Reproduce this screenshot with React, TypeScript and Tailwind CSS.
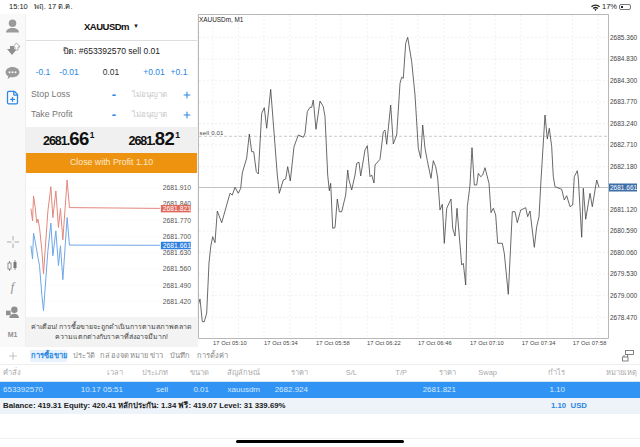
import React from "react";
import { FilePlus, Plus } from "lucide-react";

const F = "font-['Liberation_Sans','Noto_Sans',sans-serif]";

const line =
  "198.3,305 200,299 202.3,321.7 204.3,321.7 206.7,313 209,263 210.7,246.7 212.7,236.7 215,242.7 217.3,211 221.7,222.7 230,193.3 232.3,195 235,187.3 238.3,193.3 240.7,188.3 242.3,173 246.7,158 249.3,134 251.7,151.7 253.7,151.7 256.3,171.7 258.3,174 261.7,113.3 264.3,107.7 266.7,128.3 270.7,89.3 277.3,175 279.3,193.3 283.3,180 285.7,179 287.7,166.7 290.3,181 294,146.7 298.3,135 303.3,137.3 305,133.3 307.3,111.7 310,107.3 311.7,107.3 313.3,100 316,129.3 320,101 323.3,106.7 325,116.7 327.7,175 329.3,190.7 330.7,183.3 332.7,228.3 335,227.7 337.3,199 339.3,211.7 341.7,211.7 345.7,195 347.7,170 349,180 351.7,190 355,175 356.7,163.3 359,162.3 360.7,176 365,150 367.3,145.7 370,176.7 371.7,175 374,183 375,165 380,159.3 383.3,131.7 385,130 386.7,144.3 390.7,105 393.3,144 396.7,135 400,83.3 401.7,77.3 403.3,78.3 405.7,43.3 407.7,37.3 411.7,61.7 415,95 418.3,148.3 420.7,158.3 422.7,125 425,148.3 427.3,160.7 431,178.3 433.3,160.7 435.7,166.7 437.7,178 440,210 442.3,204.3 444.3,243.3 446.7,208.3 451,199 452.7,228.3 455,236 457,208.3 461.7,265 463.3,263.3 465.7,285 467.3,206.7 470,185 472,147.7 474.3,185 476.7,185 478.3,173.3 480.7,176.7 482.7,175 485,167.7 489,183.3 491,212.7 493.3,208.3 495.7,215 497.7,243.3 502.3,243.3 504.3,253.3 508.3,294.3 512.3,211.7 515,211.7 517.3,222.7 520.7,210 525.7,207.7 527.7,216.7 530,211 534.3,247.3 536.7,226.7 539,216.7 541,180 545,115 547.3,139 549.3,128.3 551.7,146.7 553.3,176.7 555,186.7 561.7,189.3 564.3,200 566.7,195.7 570,206.7 572.7,205 574.3,176.7 577.3,170.7 578.3,178 581.7,237.3 583.3,188.3 585.7,219.3 590,193.3 592.3,206.7 596.7,180 599,187.3";

const red =
  "30.7,207.7 32.3,220 33.3,195 35,206.7 36.5,222 37.7,218.3 39.3,226.7 41.7,250 43.3,273.3 47.7,210 50.7,185.7 52.7,216.7 55.7,190 58.3,226.7 60.3,207.7 62.7,239 67,179 69.3,206.7 160,207.5";
const blue =
  "30.7,245 32.3,258.3 33.3,232.3 35,240.7 37.7,256.7 39.3,265 41.7,295 43.3,310 47.7,250 50.7,222.3 52.7,255 55.7,230 58.3,265 60.3,245 62.7,279 67,216.7 69.3,244.3 160,244.5";

const hY = [37.3, 59, 80.3, 102, 123.7, 145, 166.7, 209.3, 231, 252.3, 274, 295.7, 317.3];
const vX = [213, 238.5, 264, 290, 316, 341, 367, 392, 418, 444, 470, 495, 521, 547, 572.5, 598];
const prices: [number, string][] = [
  [37.3, "2685.360"], [59, "2684.830"], [80.3, "2684.300"], [102, "2683.770"], [123.7, "2683.240"],
  [145, "2682.710"], [166.7, "2682.180"], [209.3, "2681.120"], [231, "2680.590"], [252.3, "2680.060"],
  [274, "2679.530"], [295.7, "2679.000"], [317.3, "2678.470"],
];
const times: [number, string][] = [
  [213, "05:10"], [264, "05:34"], [316, "05:58"], [367, "06:22"], [418, "06:46"], [470, "07:10"], [521.7, "07:34"], [572.7, "07:58"],
];

function Chart() {
  return (
    <svg viewBox="198 14 442 333" className="w-[442px] h-[333px] block" style={{ fontFamily: "'Liberation Sans',sans-serif" }}>
      {hY.map((y) => (
        <line key={y} x1={199} x2={608} y1={y} y2={y} stroke="#e4e4e4" strokeWidth={0.7} strokeDasharray="1.5 2.5" />
      ))}
      {vX.map((x) => (
        <line key={x} x1={x} x2={x} y1={15} y2={338} stroke="#e4e4e4" strokeWidth={0.7} strokeDasharray="1.5 2.5" />
      ))}
      <line x1={199} x2={608} y1={136.3} y2={136.3} stroke="#b5b5b5" strokeWidth={0.7} strokeDasharray="3 2" />
      <line x1={199} x2={608} y1={187.5} y2={187.5} stroke="#c2c2c2" strokeWidth={1} />
      <polyline points={line} fill="none" stroke="#444" strokeWidth={0.8} />
      <path d="M198.5 338.5V14.5H608.5V338.5H198.5" fill="none" stroke="#b8b8b8" strokeWidth={1} />
      <text x={199} y={21.5} fontSize={6.4} fill="#222">XAUUSDm, M1</text>
      <text x={199.5} y={135} fontSize={6} fill="#444" letterSpacing={0.2}>sell 0.01</text>
      {prices.map(([y, t]) => (
        <text key={t} x={610} y={y + 2.4} fontSize={6.5} fill="#444">{t}</text>
      ))}
      <rect x={609} y={183.5} width={28} height={8} fill="#3d6ea8" />
      <text x={610} y={189.9} fontSize={6.5} fill="#fff">2681.661</text>
      {times.map(([x, t]) => (
        <text key={t} x={x} y={345} fontSize={5.7} fill="#444" letterSpacing={0.1}>17 Oct {t}</text>
      ))}
    </svg>
  );
}

function MiniChart() {
  const labels: [number, string][] = [
    [187, "2681.910"], [203, "2681.840"], [219.5, "2681.770"], [236, "2681.700"],
    [252, "2681.630"], [268, "2681.560"], [284.5, "2681.490"], [300.5, "2681.420"],
  ];
  return (
    <svg viewBox="26 172 171 145" className="w-[171px] h-[145px] block" style={{ fontFamily: "'Liberation Sans',sans-serif" }}>
      {labels.map(([y]) => (
        <line key={y} x1={29} x2={160} y1={y} y2={y} stroke="#eeeeee" strokeWidth={0.7} strokeDasharray="1.5 2.5" />
      ))}
      <polyline points={red} fill="none" stroke="#e2877c" strokeWidth={1} />
      <polyline points={blue} fill="none" stroke="#6ea6e8" strokeWidth={1} />
      {labels.map(([y, t]) => (
        <text key={t} x={163} y={y + 2.5} fontSize={6.8} fill="#555">{t}</text>
      ))}
      <rect x={161} y={204} width={30} height={7.5} fill="#e0685c" />
      <text x={163} y={210} fontSize={6.8} fill="#fff">2681.821</text>
      <rect x={161} y={241} width={30} height={7.5} fill="#2f7fe0" />
      <text x={163} y={247} fontSize={6.8} fill="#fff">2681.661</text>
    </svg>
  );
}

function ToolSlot({ children, h }: { children: React.ReactNode; h: string }) {
  return <div className={`flex items-center justify-center w-full ${h}`}>{children}</div>;
}

function Toolbar() {
  return (
    <div className="w-[26px] bg-[#f9f9f9] border-r border-[#eeeeee] flex flex-col items-center text-[#9a9a9a]">
      <ToolSlot h="h-[23px]">
        <svg width="15" height="16" viewBox="0 0 16 16" fill="#9b9b9b">
          <circle cx="8" cy="5" r="4" />
          <path d="M1 15c0-3 3-5 7-5s7 2 7 5z" />
        </svg>
      </ToolSlot>
      <ToolSlot h="h-[24px]">
        <svg width="16" height="16" viewBox="0 0 16 16">
          <path d="M2 8h3V5h4v3h3l-5 6z" fill="#8f8f8f" />
          <path d="M8 6h2V9h3V6h2l-3.5-4z" fill="#fff" stroke="#999" strokeWidth="0.8" />
        </svg>
      </ToolSlot>
      <ToolSlot h="h-[24px]">
        <svg width="15" height="14" viewBox="0 0 15 14">
          <path d="M7.5 1C3.6 1 .6 3.3.6 6.2c0 1.7 1 3.1 2.6 4l-.6 2.8 3-2c.6.1 1.2.2 1.900.2 3.9 0 6.9-2.3 6.9-5S11.4 1 7.5 1z" fill="#9a9a9a" />
          <circle cx="4.5" cy="6.2" r="1" fill="#f8f8f8" />
          <circle cx="7.5" cy="6.2" r="1" fill="#f8f8f8" />
          <circle cx="10.5" cy="6.2" r="1" fill="#f8f8f8" />
        </svg>
      </ToolSlot>
      <ToolSlot h="h-[24px]">
        <FilePlus size={15} color="#2b87e3" strokeWidth={2} />
      </ToolSlot>
      <div className="flex-1" />
      <ToolSlot h="h-[24px]">
        <svg width="12" height="12" viewBox="0 0 12 12" stroke="#9a9a9a" strokeWidth="0.8">
          <path d="M6 0v4.5M6 7.5V12M0 6h4.5M7.5 6H12" />
        </svg>
      </ToolSlot>
      <ToolSlot h="h-[23px]">
        <svg width="11" height="12" viewBox="0 0 11 12">
          <path d="M2.5 1v10M8 0v10" stroke="#777" strokeWidth="0.8" />
          <rect x="1" y="3" width="3" height="6" fill="#fff" stroke="#777" strokeWidth="0.8" />
          <rect x="6.5" y="2" width="3" height="6" fill="#777" />
        </svg>
      </ToolSlot>
      <ToolSlot h="h-[23px]">
        <span className="font-['Liberation_Serif',serif] italic text-[12px] leading-none text-[#8a8a8a] -translate-y-[2px]">f</span>
      </ToolSlot>
      <ToolSlot h="h-[24px]">
        <svg width="13" height="12" viewBox="0 0 14 13" fill="#8f8f8f">
          <rect x="0" y="5" width="5" height="5" />
          <circle cx="9" cy="4" r="3.5" />
          <path d="M3.5 13c0-2.5 2.5-4.5 5.5-4.500s5 2 5 4.500z" />
        </svg>
      </ToolSlot>
      <ToolSlot h="h-[23px]">
        <span className="text-[7px] font-bold text-[#8f8f8f] leading-none -translate-y-[1px]">M1</span>
      </ToolSlot>
    </div>
  );
}

function PriceBig({ a, b, c }: { a: string; b: string; c: string }) {
  return (
    <div className="flex items-baseline justify-center font-bold text-[#111]">
      <span className="text-[12.5px] leading-none tracking-[-1px]">{a}.</span>
      <span className="text-[18.5px] leading-none tracking-[-0.5px]">{b}</span>
      <span className="text-[8.5px] leading-none -translate-y-[7px] ml-[1px]">{c}</span>
    </div>
  );
}

function StopRow({ label }: { label: string }) {
  return (
    <div className="grid grid-cols-[73px_20px_50px_26px] pl-[5px] items-center h-[20px]">
      <span className="text-[8.8px] text-[#777]">{label}</span>
      <span className="text-center text-[13px] font-bold text-[#2b87e3] leading-none">-</span>
      <span className="text-center text-[8px] text-[#c8c8c8]">ไม่อนุญาต</span>
      <Plus size={10} color="#2b87e3" strokeWidth={2.5} className="justify-self-center" />
    </div>
  );
}

function Panel() {
  return (
    <div className="w-[171px] bg-white flex flex-col">
      <div className="h-[27px] border-b border-[#dedede] flex items-center justify-center">
        <span className="text-[9.5px] font-bold text-[#111] tracking-[-0.5px]">XAUUSDm</span>
        <span className="text-[6px] ml-[4px] text-[#222]">▼</span>
      </div>
      <div className="h-[20px] flex items-center justify-center text-[8.5px] text-[#222]">ปิด: #653392570 sell 0.01</div>
      <div className="h-[24px] grid grid-cols-[26px_26px_58px_28px_22px] pl-[4px] items-center text-center text-[8.5px] text-[#2b87e3]">
        <span>-0.1</span>
        <span>-0.01</span>
        <span className="text-[#333]">0.01</span>
        <span>+0.01</span>
        <span>+0.1</span>
      </div>
      <StopRow label="Stop Loss" />
      <StopRow label="Take Profit" />
      <div className="h-[1px]" />
      <div className="h-[26px] bg-[#f0f0f0] grid grid-cols-2 items-center mt-[1px]">
        <PriceBig a="2681" b="66" c="1" />
        <PriceBig a="2681" b="82" c="1" />
      </div>
      <div className="h-[20px] bg-[#ee930f] flex items-center justify-center text-[8.8px] text-[#fbe9cc]">Close with Profit 1.10</div>
      <MiniChart />
      <div className="h-[30px] bg-[#f3f3f3] flex items-center justify-center text-center text-[7px] leading-[10px] text-[#444] whitespace-nowrap">
        <div>
          ค่าเตือน! การซื้อขายจะถูกดำเนินการตามสภาพตลาด
          <br />
          ความแตกต่างกับราคาที่ส่งอาจมีมาก!
        </div>
      </div>
    </div>
  );
}

function TabBar() {
  const tabs: [string, string][] = [
    ["ประวัติ", "ml-[6px] w-[19px]"],
    ["กล่องจดหมาย", "ml-[8px] w-[41px] tracking-[0.25px]"],
    ["ข่าว", "ml-[9px] w-[12px]"],
    ["บันทึก", "ml-[8px] w-[18px]"],
    ["การตั้งค่า", "ml-[9px] w-[27px]"],
  ];
  return (
    <div className="h-[18px] flex items-center border-b border-[#eeeeee] bg-white text-[7.5px] text-[#888] whitespace-nowrap">
      <div className="w-[26px] flex justify-center">
        <Plus size={12} color="#8a8a8a" strokeWidth={1} />
      </div>
      <div className="ml-[4px] w-[37px] h-[12px] bg-[#e8f2fc] text-[#2b87e3] font-bold flex items-center justify-center">การซื้อขาย</div>
      {tabs.map(([t, c]) => (
        <span key={t} className={c}>{t}</span>
      ))}
      <div className="flex-1" />
      <svg width="12" height="12" viewBox="0 0 12 12" fill="none" stroke="#777" strokeWidth="0.9" className="mr-[6px]">
        <rect x="3.5" y="0.5" width="8" height="4" />
        <rect x="0.5" y="7" width="5.5" height="4" />
        <path d="M2 7V5M5.5 4.5v2.5" />
      </svg>
    </div>
  );
}

const GRID = "grid grid-cols-[70px_53px_45px_41px_51px_48px_49px_50px_49px_41px_68px_72px] items-center text-right";

function Table() {
  const head = ["คำสั่ง", "เวลา", "ประเภท", "ขนาด", "สัญลักษณ์", "ราคา", "S/L", "T/P", "ราคา", "Swap", "กำไร", "หมายเหตุ"];
  const row = ["653392570", "10.17 05:51", "sell", "0.01", "xauusdm", "2682.924", "", "", "2681.821", "", "1.10", ""];
  return (
    <div>
      <div className={`${GRID} h-[17px] text-[7.5px] text-[#aaa] border-b border-[#cfe6f5]`}>
        {head.map((h, i) => (
          <span key={i} className={i === 0 ? "text-left pl-[3px]" : ""}>{h}</span>
        ))}
      </div>
      <div className={`${GRID} h-[16px] bg-[#3194f5] text-[8px] text-[#d6e9fc]`}>
        {row.map((h, i) => (
          <span key={i} className={i === 0 ? "text-left pl-[3px]" : ""}>{h}</span>
        ))}
      </div>
      <div className="h-[16px] bg-[#eef3f9] flex items-center text-[7.8px] font-bold text-[#222] pl-[3px] whitespace-nowrap">
        <span className="w-[548px]">Balance: 419.31 Equity: 420.41 หลักประกัน: 1.34 ฟรี: 419.07 Level: 31 339.69%</span>
        <span className="text-[#2b87e3]">1.10&nbsp;&nbsp;USD</span>
      </div>
    </div>
  );
}

export default function App() {
  return (
    <div className={`${F} w-[640px] h-[447px] bg-white flex flex-col overflow-hidden`}>
      <div className="h-[14px] flex items-center justify-between text-[7.5px] text-[#222] px-[9px] bg-white">
        <div className="flex gap-[6px]">
          <span>15:10</span>
          <span>พฤ. 17 ต.ค.</span>
        </div>
        <div className="flex items-center gap-[2px]">
          <svg width="9" height="7" viewBox="0 0 9 7">
            <path d="M0 2.3a6.5 6.5 0 0 1 9 0L8 3.3a5 5 0 0 0-7 0zM1.7 4a4 4 0 0 1 5.6 0l-1 1a2.6 2.6 0 0 0-3.6 0zM3.3 5.6a1.7 1.7 0 0 1 2.4 0L4.5 7z" fill="#222" />
          </svg>
          <span>17%</span>
          <div className="w-[12px] h-[6px] border border-[#777] rounded-[2px] p-[1px]">
            <div className="w-[2px] h-full bg-[#222]" />
          </div>
        </div>
      </div>
      <div className="h-[333px] flex">
        <Toolbar />
        <Panel />
        <div className="w-[1px] bg-[#f4f4f4]" />
        <Chart />
      </div>
      <TabBar />
      <Table />
      <div className="flex-1 flex flex-col items-center">
        <div className="mt-[24px] w-full h-[1px] bg-[#efefef]" />
        <div className="mt-[1px] w-[168px] h-[3px] rounded-full bg-black" />
      </div>
    </div>
  );
}
